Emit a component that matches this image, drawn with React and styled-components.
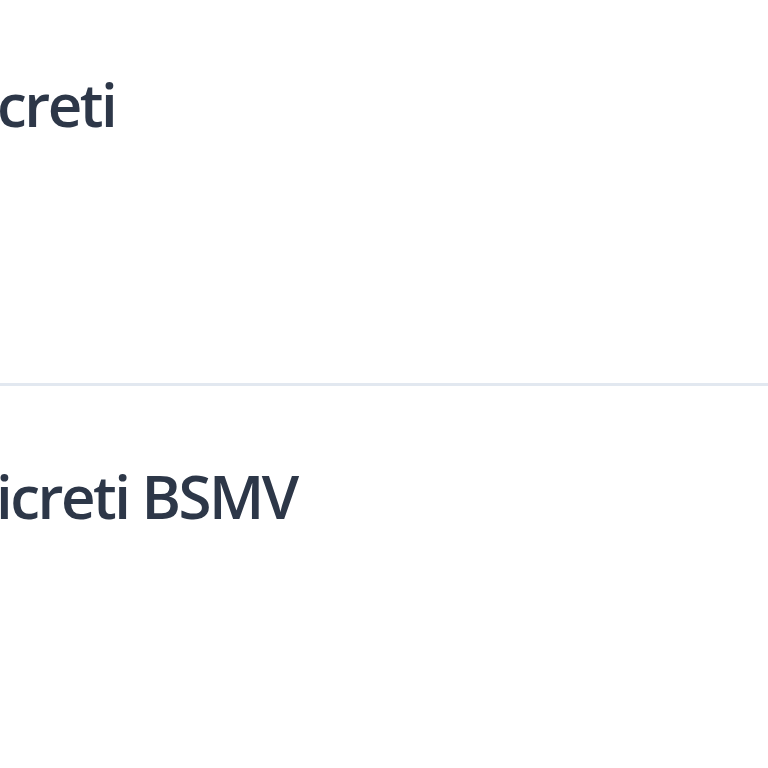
import React from "react";
import styled, { createGlobalStyle } from "styled-components";

const Global = createGlobalStyle`
  html, body { margin: 0; padding: 0; background: #ffffff; overflow: hidden; }
  #root { width: 768px; height: 768px; overflow: hidden; }
`;

const List = styled.div`
  display: flex;
  flex-direction: column;
  width: 768px;
`;

const Row = styled.div`
  height: ${(p) => p.$h}px;
  box-sizing: border-box;
  padding-top: ${(p) => p.$top}px;
  border-bottom: ${(p) => (p.$divider ? "3px solid #e2e8f0" : "none")};
  overflow: hidden;
`;

const Title = styled.div`
  font-family: "Open Sans", "Noto Sans", sans-serif;
  font-weight: 600;
  font-size: 60px;
  letter-spacing: -2.5px;
  line-height: 1;
  color: #2d3748;
  white-space: nowrap;
  margin-left: ${(p) => p.$shift}px;
`;

export default function App() {
  return (
    <>
      <Global />
      <List>
        <Row $h={386} $top={74} $divider>
          <Title $shift={-3}>creti</Title>
        </Row>
        <Row $h={382} $top={80}>
          <Title $shift={-4}>icreti BSMV</Title>
        </Row>
      </List>
    </>
  );
}
